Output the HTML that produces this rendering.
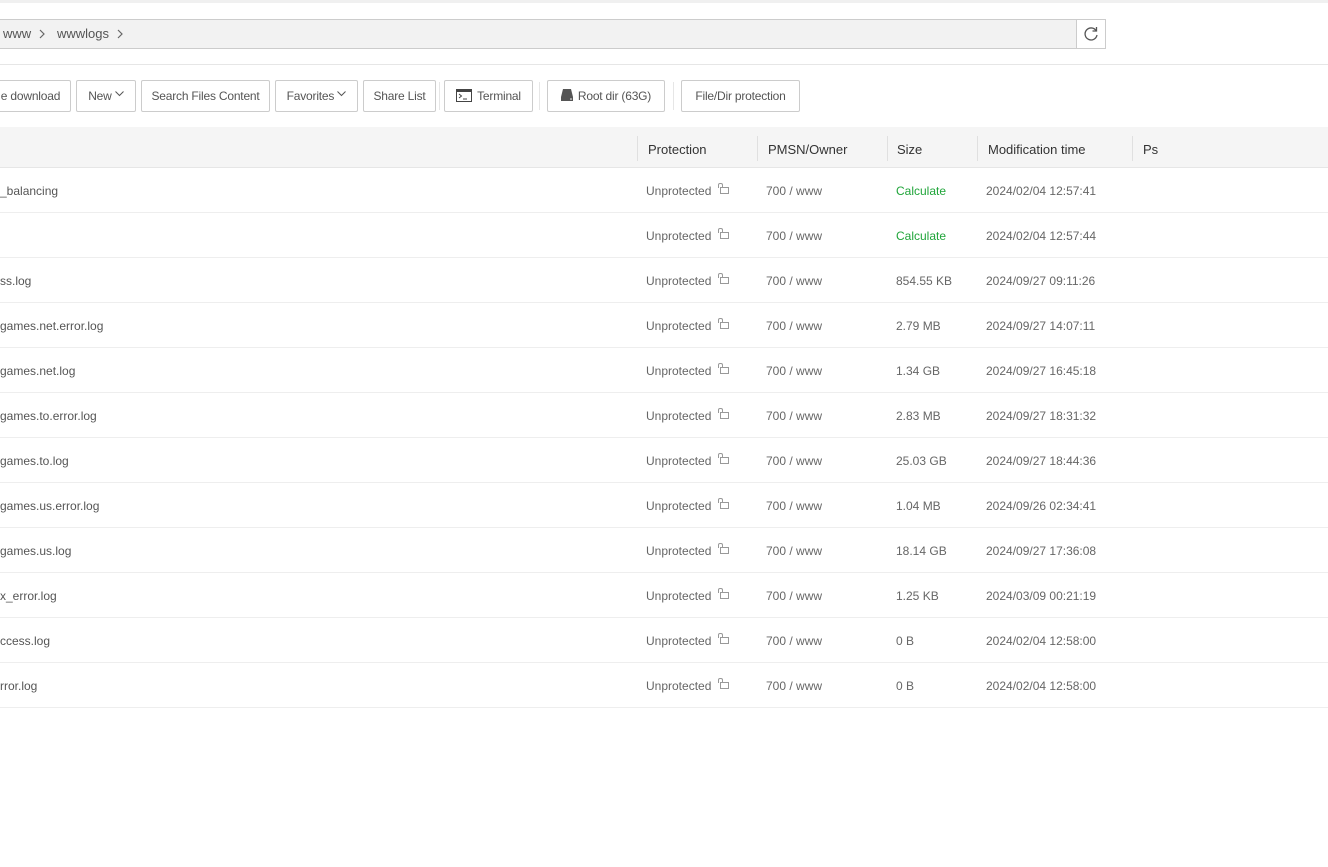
<!DOCTYPE html>
<html><head><meta charset="utf-8"><style>
*{margin:0;padding:0;box-sizing:border-box}
body{width:1328px;height:867px;background:#fff;font-family:"Liberation Sans",sans-serif;position:relative;overflow:hidden;color:#666}
.top{position:absolute;left:0;top:0;width:1328px;height:3px;background:#f0f0f0}
.crumb{position:absolute;left:-2px;top:19px;width:1079px;height:30px;background:#f2f2f2;border:1px solid #ccc;font-size:13px;color:#555;line-height:28px}
.crumb span,.crumb svg{position:absolute;top:0}
.crumb svg{top:9px}
.ref{position:absolute;left:1076px;top:19px;width:30px;height:30px;border:1px solid #ccc;background:#fff}
.hr{position:absolute;left:0;top:64px;width:1328px;height:1px;background:#e6e6e6}
.btn{position:absolute;top:80px;height:32px;border:1px solid #ccc;border-radius:2px;background:#fff;font-size:12px;letter-spacing:-0.2px;color:#555;line-height:31px;text-align:center;white-space:nowrap}
.sep{position:absolute;top:82px;width:1px;height:28px;background:#e6e6e6}
.thead{position:absolute;left:0;top:127px;width:1328px;height:41px;background:#f5f5f5;border-bottom:1px solid #e6e6e6}
.th{position:absolute;top:0;line-height:46px;font-size:13px;color:#333}
.vs{position:absolute;top:9px;width:1px;height:25px;background:#e0e0e0}
.row{position:absolute;left:0;width:1328px;height:45px;border-bottom:1px solid #eee;font-size:12px;line-height:46px}
.row span{position:absolute;top:0}
.g{color:#20a53a}
.lk{display:inline-block;width:9px;height:7px;border:1px solid #999;position:relative;top:-1px;margin-left:9px;vertical-align:middle}
.lk:before{content:"";position:absolute;left:-3px;top:-5px;width:3px;height:4px;border:1px solid #999;border-bottom:none;border-radius:2px 2px 0 0}
</style></head><body>
<div class="top"></div>
<div class="crumb"><span style="left:4px">www</span><svg style="left:40px" width="6" height="10" viewBox="0 0 6 10"><path d="M1 1l4 4-4 4" fill="none" stroke="#666" stroke-width="1.2"/></svg><span style="left:58px">wwwlogs</span><svg style="left:118px" width="6" height="10" viewBox="0 0 6 10"><path d="M1 1l4 4-4 4" fill="none" stroke="#666" stroke-width="1.2"/></svg></div>
<div class="ref"><svg width="28" height="28" viewBox="0 0 28 28"><path d="M19 10.5A6 6 0 1 0 20 15" fill="none" stroke="#555" stroke-width="1.3"/><path d="M19.5 7v4h-4" fill="none" stroke="#555" stroke-width="1.3"/></svg></div>
<div class="hr"></div>
<div class="btn" style="left:-10px;width:81px">e download</div>
<div class="btn" style="left:76px;width:60px">New <svg width="9" height="6" viewBox="0 0 9 6" style="vertical-align:3px"><path d="M0.5 0.5l4 4 4-4" fill="none" stroke="#555"/></svg></div>
<div class="btn" style="left:141px;width:129px">Search Files Content</div>
<div class="btn" style="left:275px;width:83px">Favorites <svg width="9" height="6" viewBox="0 0 9 6" style="vertical-align:3px"><path d="M0.5 0.5l4 4 4-4" fill="none" stroke="#555"/></svg></div>
<div class="btn" style="left:363px;width:73px">Share List</div>
<div class="sep" style="left:439px"></div>
<div class="btn" style="left:444px;width:89px"><svg width="16" height="13" style="vertical-align:-2px;margin-right:5px" viewBox="0 0 16 13"><rect x="0.5" y="0.5" width="15" height="12" fill="#fff" stroke="#444"/><rect x="0.5" y="0.5" width="15" height="2.5" fill="#444"/><path d="M3 5l2.5 2L3 9M7 10h4" stroke="#444" fill="none"/></svg>Terminal</div>
<div class="sep" style="left:539px"></div>
<div class="btn" style="left:547px;width:118px"><svg width="12" height="12" style="vertical-align:-1px;margin-right:5px" viewBox="0 0 12 12"><path d="M2 0h8l2 8H0z" fill="#555"/><rect x="0" y="8" width="12" height="4" fill="#555"/><circle cx="10" cy="10" r="0.8" fill="#fff"/></svg>Root dir (63G)</div>
<div class="sep" style="left:673px"></div>
<div class="btn" style="left:681px;width:119px">File/Dir protection</div>
<div class="thead">
<div class="vs" style="left:637px"></div><div class="th" style="left:648px">Protection</div>
<div class="vs" style="left:757px"></div><div class="th" style="left:768px">PMSN/Owner</div>
<div class="vs" style="left:887px"></div><div class="th" style="left:897px">Size</div>
<div class="vs" style="left:977px"></div><div class="th" style="left:988px">Modification time</div>
<div class="vs" style="left:1132px"></div><div class="th" style="left:1143px">Ps</div>
</div>
<div id="rows"></div>
<script>
var d=[["_balancing","Calculate","2024/02/04 12:57:41"],["","Calculate","2024/02/04 12:57:44"],["ss.log","854.55 KB","2024/09/27 09:11:26"],["games.net.error.log","2.79 MB","2024/09/27 14:07:11"],["games.net.log","1.34 GB","2024/09/27 16:45:18"],["games.to.error.log","2.83 MB","2024/09/27 18:31:32"],["games.to.log","25.03 GB","2024/09/27 18:44:36"],["games.us.error.log","1.04 MB","2024/09/26 02:34:41"],["games.us.log","18.14 GB","2024/09/27 17:36:08"],["x_error.log","1.25 KB","2024/03/09 00:21:19"],["ccess.log","0 B","2024/02/04 12:58:00"],["rror.log","0 B","2024/02/04 12:58:00"]];
var h="";d.forEach(function(r,i){h+='<div class="row" style="top:'+(168+i*45)+'px"><span style="left:0;color:#555">'+r[0]+'</span><span style="left:646px">Unprotected<i class="lk"></i></span><span style="left:766px">700 / www</span><span style="left:896px" class="'+(r[1]=="Calculate"?"g":"")+'">'+r[1]+'</span><span style="left:986px">'+r[2]+'</span></div>'});
document.getElementById("rows").innerHTML=h;
</script>
</body></html>
